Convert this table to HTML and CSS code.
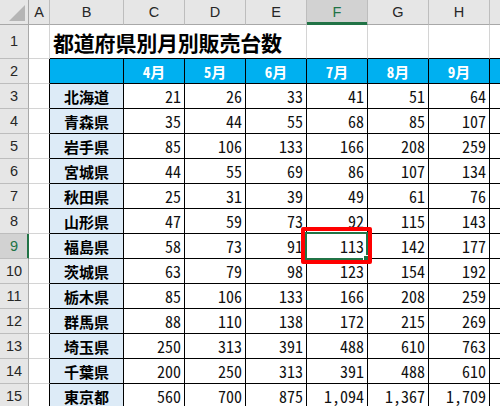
FILE: index.html
```html
<!DOCTYPE html>
<html lang="ja">
<head>
<meta charset="utf-8">
<title>都道府県別月別販売台数</title>
<link rel="stylesheet" href="styles.css">
</head>
<body>
<div class="sheet">
  <div class="grid">
    <div class="corner"><span class="tri"></span></div>
    <div class="h">A</div><div class="h">B</div><div class="h">C</div><div class="h">D</div><div class="h">E</div><div class="h sel">F</div><div class="h">G</div><div class="h">H</div><div class="h"></div>

    <div class="rh">1</div><div class="c"></div><div class="c tt title span4">都道府県別月別販売台数</div><div class="c tt"></div><div class="c tt"></div><div class="c tt"></div><div class="c tt"></div>

    <div class="rh">2</div><div class="c tl"></div><div class="t mh"></div><div class="t mh">4月</div><div class="t mh">5月</div><div class="t mh">6月</div><div class="t mh">7月</div><div class="t mh">8月</div><div class="t mh">9月</div><div class="t mh"></div>

    <div class="rh">3</div><div class="c tl"></div><div class="t pref">北海道</div><div class="t num">21</div><div class="t num">26</div><div class="t num">33</div><div class="t num">41</div><div class="t num">51</div><div class="t num">64</div><div class="t"></div>

    <div class="rh">4</div><div class="c tl"></div><div class="t pref">青森県</div><div class="t num">35</div><div class="t num">44</div><div class="t num">55</div><div class="t num">68</div><div class="t num">85</div><div class="t num">107</div><div class="t"></div>

    <div class="rh">5</div><div class="c tl"></div><div class="t pref">岩手県</div><div class="t num">85</div><div class="t num">106</div><div class="t num">133</div><div class="t num">166</div><div class="t num">208</div><div class="t num">259</div><div class="t"></div>

    <div class="rh">6</div><div class="c tl"></div><div class="t pref">宮城県</div><div class="t num">44</div><div class="t num">55</div><div class="t num">69</div><div class="t num">86</div><div class="t num">107</div><div class="t num">134</div><div class="t"></div>

    <div class="rh">7</div><div class="c tl"></div><div class="t pref">秋田県</div><div class="t num">25</div><div class="t num">31</div><div class="t num">39</div><div class="t num">49</div><div class="t num">61</div><div class="t num">76</div><div class="t"></div>

    <div class="rh">8</div><div class="c tl"></div><div class="t pref">山形県</div><div class="t num">47</div><div class="t num">59</div><div class="t num">73</div><div class="t num">92</div><div class="t num">115</div><div class="t num">143</div><div class="t"></div>

    <div class="rh rsel">9</div><div class="c tl"></div><div class="t pref">福島県</div><div class="t num">58</div><div class="t num">73</div><div class="t num">91</div><div class="t num">113</div><div class="t num">142</div><div class="t num">177</div><div class="t"></div>

    <div class="rh">10</div><div class="c tl"></div><div class="t pref">茨城県</div><div class="t num">63</div><div class="t num">79</div><div class="t num">98</div><div class="t num">123</div><div class="t num">154</div><div class="t num">192</div><div class="t"></div>

    <div class="rh">11</div><div class="c tl"></div><div class="t pref">栃木県</div><div class="t num">85</div><div class="t num">106</div><div class="t num">133</div><div class="t num">166</div><div class="t num">208</div><div class="t num">259</div><div class="t"></div>

    <div class="rh">12</div><div class="c tl"></div><div class="t pref">群馬県</div><div class="t num">88</div><div class="t num">110</div><div class="t num">138</div><div class="t num">172</div><div class="t num">215</div><div class="t num">269</div><div class="t"></div>

    <div class="rh">13</div><div class="c tl"></div><div class="t pref">埼玉県</div><div class="t num">250</div><div class="t num">313</div><div class="t num">391</div><div class="t num">488</div><div class="t num">610</div><div class="t num">763</div><div class="t"></div>

    <div class="rh">14</div><div class="c tl"></div><div class="t pref">千葉県</div><div class="t num">200</div><div class="t num">250</div><div class="t num">313</div><div class="t num">391</div><div class="t num">488</div><div class="t num">610</div><div class="t"></div>

    <div class="rh">15</div><div class="c tl"></div><div class="t pref">東京都</div><div class="t num">560</div><div class="t num">700</div><div class="t num">875</div><div class="t num">1,094</div><div class="t num">1,367</div><div class="t num">1,709</div><div class="t"></div>
  </div>
  <div class="selection"><span class="handle"></span></div>
  <div class="annot"></div>
</div>
</body>
</html>
```

FILE: styles.css
```css
html, body {
  margin: 0;
  padding: 0;
  background: #ffffff;
  overflow: hidden;
}

.sheet {
  position: relative;
  width: 500px;
  height: 406px;
  overflow: hidden;
}

.grid {
  display: grid;
  grid-template-columns: 29px 21px 74px repeat(6, 61px) 61px;
  grid-template-rows: 25px 34px repeat(14, 25px);
  font-family: "Noto Sans CJK JP", "Noto Sans", sans-serif;
  font-size: 15px;
  line-height: 17px;
  color: #000;
}

.grid > div {
  box-sizing: border-box;
  border-right: 1px solid #d4d4d4;
  border-bottom: 1px solid #d4d4d4;
  display: flex;
  align-items: center;
  overflow: hidden;
  white-space: nowrap;
}

.corner {
  background: #e6e6e6;
  position: relative;
  border-right-color: #a8a8a8 !important;
  border-bottom-color: #a8a8a8 !important;
}

.tri {
  position: absolute;
  right: 3px;
  bottom: 3px;
  width: 0;
  height: 0;
  border-left: 16px solid transparent;
  border-bottom: 16px solid #b5b5b5;
}

.grid > .h {
  background: #e6e6e6;
  justify-content: center;
  font-family: "Liberation Sans", Arial, sans-serif;
  font-size: 14.5px;
  color: #262626;
  border-right-color: #bdbdbd;
  border-bottom-color: #a8a8a8;
}

.grid > .h.sel {
  background: #d2d2d2;
  border-bottom-color: #217346;
  box-shadow: inset 0 -2px 0 #217346;
  color: #217346;
}

.grid > .rh {
  background: #e6e6e6;
  justify-content: center;
  font-family: "Liberation Sans", Arial, sans-serif;
  font-size: 14.5px;
  color: #262626;
  border-right-color: #a8a8a8;
  border-bottom-color: #bdbdbd;
}

.grid > .rh.rsel {
  background: #d2d2d2;
  border-right-color: #217346;
  box-shadow: inset -1px 0 0 #217346;
  color: #217346;
}

.grid > .tl {
  border-right-color: #000;
}

.grid > .tt {
  border-bottom-color: #000;
}

.grid > .title {
  grid-column: span 4;
  font-size: 21px;
  line-height: 24px;
  font-weight: bold;
  padding-left: 3px;
  padding-top: 1px;
  letter-spacing: -0.2px;
}

.grid > .t {
  border-right: 1px solid #000;
  border-bottom: 1px solid #000;
}

.grid > .mh {
  background: #00b0f0;
  color: #ffffff;
  font-weight: bold;
  justify-content: center;
  font-feature-settings: "hwid";
}

.grid > .pref {
  background: #ddebf7;
  font-weight: bold;
  justify-content: center;
}

.grid > .num {
  justify-content: flex-end;
  padding-right: 3px;
  font-size: 16px;
  font-feature-settings: "hwid";
  color: #111;
}

.selection {
  position: absolute;
  left: 305px;
  top: 232px;
  width: 63px;
  height: 28px;
  box-sizing: border-box;
  border: 2px solid #217346;
}

.handle {
  position: absolute;
  right: -4px;
  bottom: -4px;
  width: 5px;
  height: 5px;
  background: #217346;
  border: 1px solid #ffffff;
}

.annot {
  position: absolute;
  left: 301px;
  top: 227px;
  width: 71px;
  height: 37px;
  box-sizing: border-box;
  border: 4px solid #ff0000;
  border-radius: 2px;
}
```
